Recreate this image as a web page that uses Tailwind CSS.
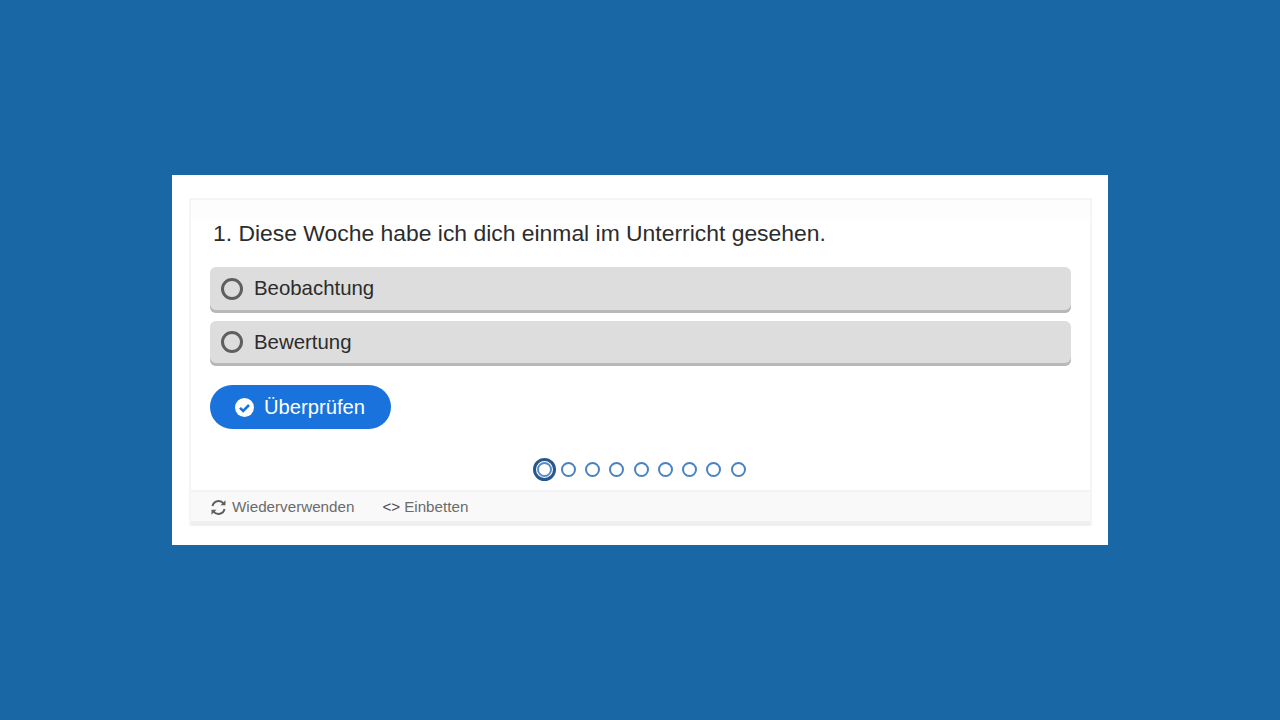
<!DOCTYPE html>
<html lang="de">
<head>
<meta charset="utf-8">
<script src="https://cdn.jsdelivr.net/npm/@tailwindcss/browser@4"></script>
</head>
<body class="m-0">
<div class="w-[1280px] h-[720px] bg-[#1a67a6] flex items-center justify-center font-['Liberation_Sans',Arial,sans-serif]">
  <div class="w-[936px] h-[370px] bg-white pt-[23px] px-[17px]">
    <div class="w-[903px] h-[328px] border-x-2 border-t-2 border-[#f5f5f5] flex flex-col">
      <div class="h-[67px] pl-[22px] pt-[21px] text-[22.9px] leading-[25px] text-[#2c2c2c] bg-[linear-gradient(#fdfdfd_21px,#ffffff_21px)]">1. Diese Woche habe ich dich einmal im Unterricht gesehen.</div>
      <div class="mx-[19px] flex flex-col gap-[8px]">
        <div class="h-[46px] bg-[#dddddd] rounded-[6px] shadow-[inset_0_-3px_0_#b8b8b8] flex items-center pl-[11px] pb-[3px] gap-[11px]">
          <span class="w-[22px] h-[22px] rounded-full border-[3px] border-[#5f5f5f]"></span>
          <span class="text-[20.4px] leading-[25px] text-[#2c2c2c]">Beobachtung</span>
        </div>
        <div class="h-[45px] bg-[#dddddd] rounded-[6px] shadow-[inset_0_-3px_0_#b8b8b8] flex items-center pl-[11px] pb-[3px] gap-[11px]">
          <span class="w-[22px] h-[22px] rounded-full border-[3px] border-[#5f5f5f]"></span>
          <span class="text-[20.4px] leading-[25px] text-[#2c2c2c]">Bewertung</span>
        </div>
      </div>
      <div class="mx-[19px] mt-[19px] w-[181px] h-[44px] bg-[#1a73dc] rounded-full flex items-center pl-[25px] gap-[10px] text-white">
        <svg class="w-[19px] h-[19px]" viewBox="0 0 19 19"><circle cx="9.5" cy="9.5" r="9.5" fill="#fff"/><path d="M5 9.8l3.2 3.2L14 7" fill="none" stroke="#1a73dc" stroke-width="2.6"/></svg>
        <span class="text-[20.2px] leading-[24px]">Überprüfen</span>
      </div>
      <div class="mt-[29px] h-[23px] flex items-center justify-center gap-[9.25px] pr-[3px]">
        <span class="w-[23px] h-[23px] rounded-full border-[3px] border-[#24588f] p-[1px] -mr-[4px]"><span class="block w-[15px] h-[15px] rounded-full border-2 border-[#5a8cc4]"></span></span>
        <span class="w-[15px] h-[15px] rounded-full border-2 border-[#4a82c0]"></span>
        <span class="w-[15px] h-[15px] rounded-full border-2 border-[#4a82c0]"></span>
        <span class="w-[15px] h-[15px] rounded-full border-2 border-[#4a82c0]"></span>
        <span class="w-[15px] h-[15px] rounded-full border-2 border-[#4a82c0]"></span>
        <span class="w-[15px] h-[15px] rounded-full border-2 border-[#4a82c0]"></span>
        <span class="w-[15px] h-[15px] rounded-full border-2 border-[#4a82c0]"></span>
        <span class="w-[15px] h-[15px] rounded-full border-2 border-[#4a82c0]"></span>
        <span class="w-[15px] h-[15px] rounded-full border-2 border-[#4a82c0]"></span>
      </div>
      <div class="mt-[9px] h-[36px] bg-[#f9f9f9] border-t-2 border-b-[5px] border-t-[#f3f3f3] border-b-[#efefef] flex items-center pl-[20px] pt-[1px] text-[15.2px] text-[#6b6b6b]">
        <svg class="w-[17px] h-[17px] mr-[5px] -ml-[1px]" viewBox="0 0 17 17" fill="none" stroke="#5f5f5f" stroke-width="2"><path d="M2.5 7A6.2 6.2 0 0 1 13.5 4.5"/><path d="M14.5 10A6.2 6.2 0 0 1 3.5 12.5"/><path d="M15.5 1.2v5h-5z" fill="#5f5f5f" stroke="none"/><path d="M1.5 15.8v-5h5z" fill="#5f5f5f" stroke="none"/></svg>
        <span>Wiederverwenden</span>
        <span class="ml-[28px] text-[#4f4f4f] mr-[4px]">&lt;&gt;</span>
        <span>Einbetten</span>
      </div>
    </div>
  </div>
</div>
</body>
</html>
